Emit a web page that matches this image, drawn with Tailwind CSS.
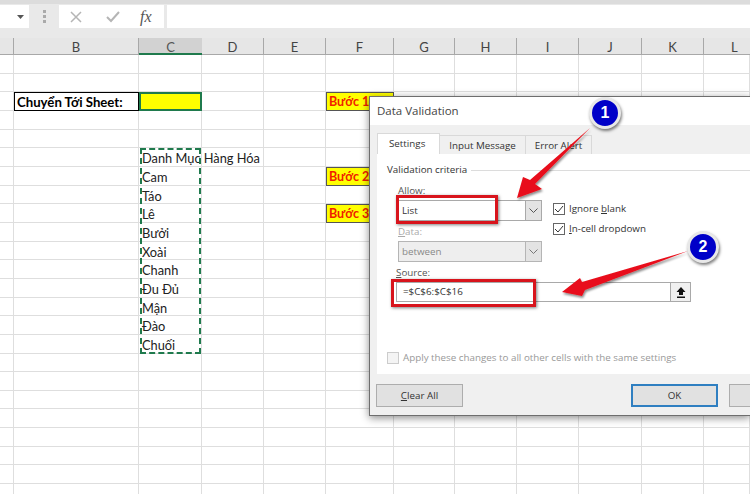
<!DOCTYPE html>
<html lang="vi">
<head>
<meta charset="UTF-8">
<title>Data Validation</title>
<script src="https://cdn.jsdelivr.net/npm/@tailwindcss/browser@4"></script>
</head>
<body class="relative w-[750px] h-[494px] overflow-hidden bg-white font-['Lato',sans-serif] text-[#222]">

<!-- formula bar -->
<div class="flex items-start h-[38px] bg-[#e9e9e9] border-t-[4px] border-[#dcdcdc] pt-[1px]">
  <div class="w-[29px] h-[23px] bg-white flex items-center justify-end pr-[5px]">
    <svg width="7" height="4" viewBox="0 0 7 4"><path d="M0 0h7L3.500 4z" fill="#555"/></svg>
  </div>
  <div class="w-[30px] h-[23px] flex flex-col items-center justify-center gap-[2px]">
    <i class="w-[3px] h-[3px] bg-[#aaa]"></i><i class="w-[3px] h-[3px] bg-[#aaa]"></i><i class="w-[3px] h-[3px] bg-[#aaa]"></i>
  </div>
  <div class="w-[105px] h-[23px] bg-white flex items-center">
    <svg class="ml-[11px]" width="12" height="12" viewBox="0 0 12 12" fill="none" stroke="#b5b5b5" stroke-width="1.500"><path d="M1 1l10 10M11 1L1 11"/></svg>
    <svg class="ml-[24px]" width="14" height="12" viewBox="0 0 14 12" fill="none" stroke="#b5b5b5" stroke-width="2"><path d="M1 6l4 4 8-9"/></svg>
    <span class="ml-[20px] font-['Liberation_Serif',serif] italic text-[16px] text-[#555]">fx</span>
  </div>
  <div class="ml-[3px] flex-1 h-[23px] bg-white"></div>
</div>

<!-- sheet -->
<div id="sheet" class="grid grid-cols-[14px_125px_63px_62px_62px_68px_61px_62px_62px_63px_62px_46px] grid-rows-[17px] auto-rows-[18.67px]"></div>

<!-- dashed copy range -->
<div class="absolute left-[140px] top-[148px] w-[61px] h-[206px] border-2 border-dashed border-[#1f7a4d]"></div>

<!-- dialog -->
<div class="absolute left-[369px] top-[96px] w-[381px] h-[320px] overflow-hidden bg-[#f0f0f0] border border-r-0 border-[#6e6e6e] shadow-[0_2px_8px_rgba(0,0,0,0.45)] font-['Open_Sans',sans-serif] text-[9.8px] text-[#333]">
  <div class="h-[28px] bg-white pl-[7px] flex items-center text-[11.500px] text-[#444]">Data Validation</div>
  <div class="flex h-[29px] items-end pl-[7px]">
    <div class="w-[63px] h-[21px] bg-white border border-b-0 border-[#d9d9d9] pl-[11px] leading-[20px]">Settings</div>
    <div class="w-[86px] h-[19px] border-t border-r border-[#d9d9d9] text-center leading-[19px]">Input Message</div>
    <div class="w-[66px] h-[19px] border-t border-r border-[#d9d9d9] text-center leading-[19px]">Error Alert</div>
  </div>
  <div class="ml-[7px] h-[220px] bg-white pl-[10px] pt-[9px] relative">
    <div class="flex items-center gap-[4px] h-[15px]">
      <span>Validation criteria</span><div class="flex-1 h-px bg-[#dcdcdc]"></div>
    </div>
    <div class="flex mt-[4px] ml-[11px]">
      <div class="w-[144px] shrink-0">
        <div class="h-[18px] leading-[18px] text-[#555]"><u>A</u>llow:</div>
        <div class="flex h-[21px] border border-[#a9a9a9] bg-white">
          <span class="flex-1 pl-[3px] leading-[19px]">List</span>
          <div class="w-[16px] bg-[#e3e3e3] border-l border-[#a9a9a9] flex items-center justify-center">
            <svg width="9" height="5" viewBox="0 0 9 5" fill="none" stroke="#555"><path d="M.5.500l4 4 4-4"/></svg>
          </div>
        </div>
        <div class="h-[20px] leading-[22px] text-[#aaa]"><u>D</u>ata:</div>
        <div class="flex h-[21px] border border-[#b5b5b5] bg-[#eee] text-[#888]">
          <span class="flex-1 pl-[3px] leading-[19px]">between</span>
          <div class="w-[16px] bg-[#e3e3e3] border-l border-[#b5b5b5] flex items-center justify-center">
            <svg width="9" height="5" viewBox="0 0 9 5" fill="none" stroke="#777"><path d="M.5.500l4 4 4-4"/></svg>
          </div>
        </div>
      </div>
      <div class="ml-[11px] pt-[17px]">
        <div class="flex items-center h-[20px] gap-[4px]">
          <span class="w-[12px] h-[12px] border border-[#666] bg-white flex items-center justify-center"><svg width="10" height="8" viewBox="0 0 10 8" fill="none" stroke="#333"><path d="M1 4l3 3 5-6"/></svg></span>
          <span>Ignore <u>b</u>lank</span>
        </div>
        <div class="flex items-center h-[20px] gap-[4px]">
          <span class="w-[12px] h-[12px] border border-[#666] bg-white flex items-center justify-center"><svg width="10" height="8" viewBox="0 0 10 8" fill="none" stroke="#333"><path d="M1 4l3 3 5-6"/></svg></span>
          <span><u>I</u>n-cell dropdown</span>
        </div>
      </div>
    </div>
    <div class="ml-[9px] h-[20px] leading-[22px] text-[#555]"><u>S</u>ource:</div>
    <div class="ml-[9px] flex w-[295px] h-[20px] border border-[#a9a9a9]">
      <span class="flex-1 pl-[6px] leading-[18px]">=$C$6:$C$16</span>
      <div class="w-[20px] bg-[#f0f0f0] border-l border-[#a9a9a9] flex items-center justify-center">
        <svg width="10" height="11" viewBox="0 0 10 11" fill="#111"><path d="M5 0L9.500 5H7v3H3V5H.5zM1 9.500h8V11H1z"/></svg>
      </div>
    </div>
    <div class="flex items-center gap-[4px] mt-[49px] text-[#999]">
      <span class="w-[12px] h-[12px] border border-[#ccc] bg-[#f4f4f4]"></span>
      <span>Apply these changes to all other cells with the same settings</span>
    </div>
  </div>
  <div class="flex pl-[6px] pt-[10px]">
    <div class="shrink-0 w-[87px] h-[23px] bg-[#e1e1e1] border border-[#adadad] text-center leading-[21px]"><u>C</u>lear All</div>
    <div class="shrink-0 ml-[168px] w-[87px] h-[23px] bg-[#e1e1e1] border-2 border-[#2f7fc1] text-center leading-[19px]">OK</div>
    <div class="shrink-0 ml-[11px] w-[21px] h-[23px] bg-[#e1e1e1] border border-r-0 border-[#adadad]"></div>
  </div>
</div>

<!-- red highlight boxes -->
<div class="absolute left-[396px] top-[195px] w-[102px] h-[29px] border-[3px] border-[#d8141c] shadow-[1px_1px_3px_rgba(0,0,0,0.5)]"></div>
<div class="absolute left-[391px] top-[279px] w-[145px] h-[28px] border-[3px] border-[#d8141c] shadow-[1px_1px_3px_rgba(0,0,0,0.5)]"></div>

<!-- arrows -->
<svg class="absolute left-0 top-0" width="750" height="494" viewBox="0 0 750 494">
  <defs><filter id="s" x="-20%" y="-20%" width="140%" height="140%"><feDropShadow dx="1" dy="2" stdDeviation="1.200" flood-opacity=".45"/></filter></defs>
  <path filter="url(#s)" fill="#e8101a" d="M590 128 L535 184 L542 189 L517 198 L523 177 L530 180 Z"/>
  <path filter="url(#s)" fill="#e8101a" d="M688 251 L585 290 L582 296 L562 292 L580 278 L582 282 Z"/>
</svg>

<!-- step badges -->
<div class="absolute left-[589px] top-[97px] w-[32px] h-[32px] rounded-full bg-[#0000c8] border-[3px] border-[#e8e8e8] shadow-[1px_2px_3px_rgba(0,0,0,0.5)] flex items-center justify-center text-white font-bold text-[16px] font-['Liberation_Sans',sans-serif]">1</div>
<div class="absolute left-[687px] top-[231px] w-[32px] h-[32px] rounded-full bg-[#0000c8] border-[3px] border-[#e8e8e8] shadow-[1px_2px_3px_rgba(0,0,0,0.5)] flex items-center justify-center text-white font-bold text-[16px] font-['Liberation_Sans',sans-serif]">2</div>

<script>
  const sheet = document.getElementById('sheet');
  const heads = ['', 'B', 'C', 'D', 'E', 'F', 'G', 'H', 'I', 'J', 'K', 'L'];
  heads.forEach((h, i) => {
    const c = document.createElement('div');
    c.className = i === 2
      ? 'bg-[#d2d2d2] border-b-2 border-[#1f7a4d] text-center text-[13px] leading-[19px] text-[#555]'
      : 'bg-[#e6e6e6] border-r border-b border-[#a8a8a8] text-center text-[13px] leading-[19px] text-[#444]';
    if (i === 11) c.className = 'bg-[#e6e6e6] border-b border-[#a8a8a8] pl-[27px] text-[13px] leading-[19px] text-[#444]';
    c.textContent = h;
    sheet.appendChild(c);
  });
  const list = ['Danh Mục Hàng Hóa', 'Cam', 'Táo', 'Lê', 'Bưởi', 'Xoài', 'Chanh', 'Đu Đủ', 'Mận', 'Đào', 'Chuối'];
  const steps = { 2: 'Bước 1', 6: 'Bước 2', 8: 'Bước 3' };
  for (let r = 0; r < 24; r++) {
    for (let col = 0; col < 12; col++) {
      const c = document.createElement('div');
      c.className = 'border-r border-b border-[#dedede] text-[12.800px] leading-[20px] whitespace-nowrap pl-[3px]';
      if (col === 0) c.className = 'border-b border-r border-[#dedede]';
      if (r === 2 && col === 1) {
        c.className = 'border border-black font-bold text-[13.200px] leading-[18px] pl-[2px] text-black';
        c.textContent = 'Chuyển Tới Sheet:';
      }
      if (r === 2 && col === 2) c.className = 'bg-[#ffff00] border-2 border-[#1f7a4d]';
      if (col === 5 && steps[r]) {
        c.className = 'bg-[#ffff00] border border-[#555] font-bold text-[12.500px] leading-[18px] pl-[2px] text-[#f02000] whitespace-nowrap';
        c.textContent = steps[r];
      }
      if (col === 2 && r >= 5 && r < 16) c.textContent = list[r - 5];
      sheet.appendChild(c);
    }
  }
</script>
</body>
</html>
